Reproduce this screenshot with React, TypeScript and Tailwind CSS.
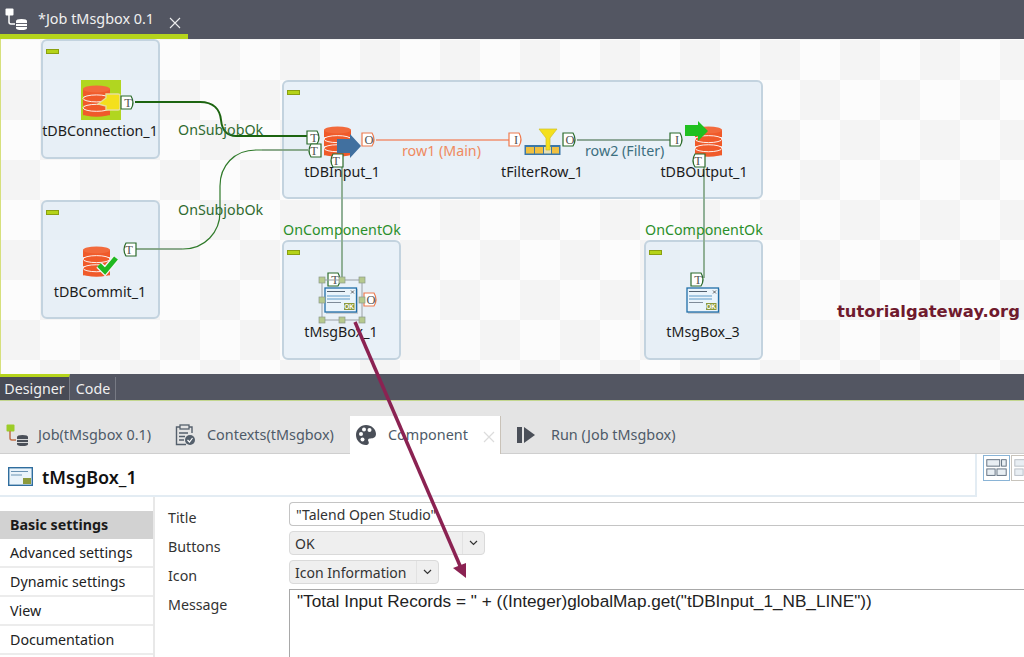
import React from "react";

const GREEN_DARK = "#2b6b2b";
const ORANGE = "#ee7a4e";

// Connector tag on a component (T / O / I)
function Port({ x, y, letter, color, dir = "right" }: { x: number; y: number; letter: string; color: string; dir?: "left" | "right" }) {
  const w = 14;
  const h = 13;
  const d =
    dir === "right"
      ? `M${x} ${y}H${x + w - 4}Q${x + w} ${y + h / 2} ${x + w - 4} ${y + h}H${x}Z`
      : `M${x + w} ${y}H${x + 4}Q${x} ${y + h / 2} ${x + 4} ${y + h}H${x + w}Z`;
  return (
    <g>
      <path d={d} fill="#ffffff" stroke={color} strokeWidth="1.2" />
      <text x={x + 7} y={y + 10.8} textAnchor="middle" fontSize="12.5" fill="#555" fontFamily="'Liberation Serif', serif">
        {letter}
      </text>
    </g>
  );
}

function DbStack({ x, y, w = 27, h = 31 }: { x: number; y: number; w?: number; h?: number }) {
  const c = "#f05a2a";
  const disc = h / 3.4;
  return (
    <g>
      {[0, 1, 2].map((i) => {
        const top = y + (i * (h - disc)) / 2.4;
        return (
          <g key={i}>
            <rect x={x} y={top + 3} width={w} height={disc - 2} fill={c} />
            <ellipse cx={x + w / 2} cy={top + disc - 1} rx={w / 2} ry={3.5} fill={c} />
            <ellipse cx={x + w / 2} cy={top + 3} rx={w / 2} ry={3.5} fill={i === 0 ? "#f26a3c" : c} stroke="#ffffff" strokeWidth={i === 0 ? 0 : 0.9} />
          </g>
        );
      })}
    </g>
  );
}

function MsgIcon({ x, y }: { x: number; y: number }) {
  return (
    <g>
      <rect x={x + 1} y={y + 1} width="32" height="25" fill="#c9ced3" />
      <rect x={x} y={y} width="31.5" height="24" fill="#eaf4fb" stroke="#1f6ea8" strokeWidth="1.3" />
      <path d={`M${x + 2} ${y + 3.5}h18`} stroke="#52606e" strokeWidth="1" />
      <path d={`M${x + 2} ${y + 8}h23M${x + 2} ${y + 11}h23`} stroke="#5d9ac8" strokeWidth="1" />
      <path d={`M${x + 2} ${y + 14.5}h14`} stroke="#7f8c99" strokeWidth="1" />
      <path d={`M${x + 26} ${y + 2.5}l3 3m0-3l-3 3`} stroke="#555" strokeWidth="0.9" />
      <rect x={x + 19} y={y + 15} width="10.5" height="7" fill="#8c9a3c" />
      <text x={x + 24.2} y={y + 21.2} textAnchor="middle" fontSize="6.5" fontWeight="700" fill="#fff" fontFamily="'Liberation Sans', sans-serif">
        OK
      </text>
    </g>
  );
}

function Handle({ x, y }: { x: number; y: number }) {
  return <rect x={x - 3} y={y - 3} width="6" height="6" fill="#b6c98e" stroke="#8d9a8a" strokeWidth="0.7" />;
}

// Wires, ports and component icons of the job diagram
function Diagram() {
  return (
    <svg className="absolute inset-0 w-[1024px] h-[335px]" viewBox="0 39 1024 335">
      <path d="M135 102H200C214 102 220 110 221 120C222 130 226 136 236 136H308" fill="none" stroke="#1c6410" strokeWidth="2" />
      <path d="M135 249H183C205 249 220 232 220 212V186C220 166 234 150 256 150H308" fill="none" stroke="#2f7a2a" strokeWidth="1.2" />
      <path d="M135 249H182M262 150H308" fill="none" stroke="#8aa68c" strokeWidth="1.6" />
      <path d="M376 140H510" stroke="#f09070" strokeWidth="1.6" />
      <path d="M577 140H670" stroke="#6f8f78" strokeWidth="1.6" />
      <path d="M342 165V281" stroke="#90b096" strokeWidth="2" />
      <path d="M704 165V278" stroke="#90b096" strokeWidth="2" />

      {/* tDBConnection */}
      <rect x="81" y="80" width="40" height="40" fill="#b1d620" />
      <DbStack x={83} y={86} w={27} h={32} />
      <path d="M98 104L106 98V94H118Q120 94 120 96V108Q120 110 118 110H106V106Z" fill="#f4e01c" stroke="#e6df9a" strokeWidth="1.4" />
      <Port x={121} y={96} letter="T" color={GREEN_DARK} />

      {/* tDBInput */}
      <DbStack x={324} y={127} w={27} h={31} />
      <path d="M337 139H350V134L361 146L350 158V153H337Z" fill="#41709f" />
      <Port x={307} y={131} letter="T" color={GREEN_DARK} />
      <Port x={307} y={144} letter="T" color={GREEN_DARK} dir="left" />
      <Port x={329} y={154} letter="T" color={GREEN_DARK} dir="left" />
      <Port x={362} y={133} letter="O" color={ORANGE} />

      {/* tFilterRow */}
      <rect x="524.5" y="145" width="36" height="10" fill="#3c78a8" />
      <rect x="526" y="147" width="8" height="6.5" fill="#f0c040" />
      <rect x="535" y="147" width="8" height="6.5" fill="#f0c040" />
      <rect x="544" y="147" width="7" height="6.5" fill="#e8dfb0" />
      <rect x="552" y="147" width="7" height="6.5" fill="#f0c040" />
      <path d="M539 129H557L550 138V150H546V138Z" fill="#f4e01c" stroke="#cfc02a" strokeWidth="0.7" />
      <Port x={509} y={133} letter="I" color={ORANGE} />
      <Port x={563} y={133} letter="O" color={GREEN_DARK} />

      {/* tDBOutput */}
      <DbStack x={695} y={127} w={27} h={31} />
      <path d="M685 125H698V121L708 131L698 141V136H685Z" fill="#1fc01f" />
      <Port x={670} y={133} letter="I" color={GREEN_DARK} />
      <Port x={691} y={154} letter="T" color={GREEN_DARK} dir="left" />

      {/* tDBCommit */}
      <DbStack x={83} y={247} w={27} h={31} />
      <path d="M99 265L105 271L116 258" fill="none" stroke="#f4f4f4" strokeWidth="7.5" />
      <path d="M99 265L105 271L116 258" fill="none" stroke="#1fb81f" strokeWidth="5" />
      <Port x={122} y={243} letter="T" color={GREEN_DARK} dir="left" />

      {/* tMsgBox_1, selected */}
      <Port x={328} y={273} letter="T" color={GREEN_DARK} />
      <Port x={364} y={293} letter="O" color={ORANGE} />
      <rect x="322" y="280" width="40" height="40" fill="none" stroke="#9aa0a4" strokeWidth="1" />
      <MsgIcon x={325} y={288} />
      <Handle x={322} y={280} />
      <Handle x={342} y={280} />
      <Handle x={362} y={280} />
      <Handle x={322} y={300} />
      <Handle x={362} y={300} />
      <Handle x={322} y={320} />
      <Handle x={342} y={320} />
      <Handle x={362} y={320} />

      {/* tMsgBox_3 */}
      <Port x={691} y={273} letter="T" color={GREEN_DARK} />
      <MsgIcon x={687} y={288} />
    </svg>
  );
}

function Canvas() {
  const panel = "absolute rounded-md border-2 border-[#c3d3df] bg-[#e3edf6]/80";
  const bar = "absolute left-[3px] top-[8px] w-[13px] h-[5px] bg-[#b5d318] border border-[#8aa010]";
  const node = "absolute -translate-x-1/2 text-[14.25px] leading-4 text-[#1c1c1c] whitespace-nowrap";
  const wire = "absolute text-[14.25px] leading-5 whitespace-nowrap";
  return (
    <div className="relative h-[335px] shrink-0 overflow-hidden border-l border-[#d6e07c] bg-[image:repeating-conic-gradient(#f4f4f4_0%_25%,#fcfcfc_0%_50%)] bg-[length:80px_80px] bg-[position:-1px_1px]">
      <div className="absolute -left-px top-0 w-[1024px] h-[335px]">
        <div className={`${panel} left-[41px] top-0 w-[119px] h-[120px]`}><div className={bar} /></div>
        <div className={`${panel} left-[282px] top-[41px] w-[481px] h-[119px]`}><div className={bar} /></div>
        <div className={`${panel} left-[41px] top-[161px] w-[119px] h-[119px]`}><div className={bar} /></div>
        <div className={`${panel} left-[282px] top-[201px] w-[119px] h-[120px]`}><div className={bar} /></div>
        <div className={`${panel} left-[644px] top-[201px] w-[119px] h-[120px]`}><div className={bar} /></div>

        <Diagram />

        <span className={`${node} left-[100px] top-[84px]`}>tDBConnection_1</span>
        <span className={`${node} left-[100px] top-[245px]`}>tDBCommit_1</span>
        <span className={`${node} left-[342px] top-[125px]`}>tDBInput_1</span>
        <span className={`${node} left-[542px] top-[125px]`}>tFilterRow_1</span>
        <span className={`${node} left-[704px] top-[125px]`}>tDBOutput_1</span>
        <span className={`${node} left-[341px] top-[285px]`}>tMsgBox_1</span>
        <span className={`${node} left-[703px] top-[285px]`}>tMsgBox_3</span>

        <span className={`${wire} left-[178px] top-[81px] text-[#2f6a2f]`}>OnSubjobOk</span>
        <span className={`${wire} left-[178px] top-[161px] text-[#2f6a2f]`}>OnSubjobOk</span>
        <span className={`${wire} left-[283px] top-[181px] text-[#2a8f2a]`}>OnComponentOk</span>
        <span className={`${wire} left-[645px] top-[181px] text-[#2a8f2a]`}>OnComponentOk</span>
        <span className={`${wire} left-[402px] top-[102px] text-[#ef8a5f]`}>row1 (Main)</span>
        <span className={`${wire} left-[585px] top-[102px] text-[#3d6f80]`}>row2 (Filter)</span>

        <span className="absolute left-[837px] top-[261px] font-['DejaVu_Sans',sans-serif] font-bold text-[16.4px] leading-6 text-[#6f1a2e] whitespace-nowrap">
          tutorialgateway.org
        </span>
      </div>
    </div>
  );
}

function JobIcon({ dark }: { dark?: boolean }) {
  const line = dark ? "#c0704a" : "#ffffff";
  const top = dark ? "#9ccc28" : "#ffffff";
  const db = dark ? "#4a4f58" : "#ffffff";
  return (
    <svg width="23" height="22" viewBox="0 0 23 22">
      <rect x="0.5" y="0.5" width="8" height="7" rx="1" fill={top} />
      <path d="M4 7V14Q4 16 6 16H10" fill="none" stroke={line} strokeWidth="1.5" />
      <path d="M11 13Q11 11 16.5 11T22 13V20Q22 22 16.5 22T11 20Z" fill={db} />
      <path d="M11 15.5H22M11 18.5H22" stroke={dark ? "#e4e4e4" : "#535662"} strokeWidth="0.9" />
    </svg>
  );
}

function LayoutButton({ active }: { active?: boolean }) {
  const c = active ? "#5a6a7a" : "#b5bcc4";
  return (
    <svg className={`w-[27px] h-[26px] shrink-0 border ${active ? "border-[#8ab4d6]" : "border-[#c8c4bc]"}`} viewBox="0 0 27 26">
      <rect x="3" y="4" width="14" height="7" fill="#e8eef3" stroke={c} />
      <rect x="19" y="4" width="5" height="7" fill="#e8eef3" stroke={c} />
      <rect x="3" y="14" width="9" height="7" fill="#e8eef3" stroke={c} />
      <rect x="14" y="14" width="10" height="7" fill="#e8eef3" stroke={c} />
    </svg>
  );
}

function BottomTabs() {
  const text = "text-[14.4px] text-[#4e5a68] whitespace-nowrap";
  return (
    <div className="h-[53px] shrink-0 bg-[#e4e4e4] flex items-end border-b border-[#cfcfcf]">
      <div className="flex items-center h-[37px] pl-[6px] w-[169px] gap-[9px]">
        <JobIcon dark />
        <span className={text}>Job(tMsgbox 0.1)</span>
      </div>
      <div className="flex items-center h-[37px] pl-[6px] w-[181px] gap-[12px]">
        <svg width="20" height="22" viewBox="0 0 20 22" fill="none">
          <path d="M5 3H1.5V20.5H11M14 3H17V9" stroke="#55606c" strokeWidth="1.4" />
          <rect x="5" y="1" width="9" height="4" stroke="#55606c" strokeWidth="1.3" />
          <path d="M4 9H13M4 12.5H10M4 16H9" stroke="#55606c" strokeWidth="1.3" />
          <circle cx="15" cy="16" r="5" fill="#55606c" />
          <path d="M12.5 16L14.5 18L17.5 14" stroke="#fff" strokeWidth="1.2" />
        </svg>
        <span className={text}>Contexts(tMsgbox)</span>
      </div>
      <div className="flex items-center h-[38px] w-[151px] pl-[6px] gap-[12px] bg-white border-r border-[#c9c2b8] -mb-px">
        <svg width="20" height="20" viewBox="0 0 20 20">
          <path d="M10 0C15.5 0 20 4 20 9C20 13 16 13.5 14 13.5C12 13.5 11.5 15 12.5 16.5C13.5 18.5 12 20 10 20C4.5 20 0 15.5 0 10S4.5 0 10 0Z" fill="#4a4f58" />
          <circle cx="5" cy="9" r="2" fill="#fff" />
          <circle cx="8" cy="4.5" r="2" fill="#fff" />
          <circle cx="13.5" cy="5" r="2" fill="#fff" />
          <circle cx="6.5" cy="14.5" r="2" fill="#fff" />
        </svg>
        <span className={`${text} mr-[3px]`}>Component</span>
        <svg width="12" height="12" viewBox="0 0 12 12" className="mt-[3px]">
          <path d="M1 1L11 11M11 1L1 11" stroke="#dcdcdc" strokeWidth="1.2" />
        </svg>
      </div>
      <div className="flex items-center h-[37px] pl-[16px] gap-[16px]">
        <svg width="18" height="16" viewBox="0 0 18 16">
          <rect x="0" y="0" width="5" height="16" fill="#4a4f58" />
          <path d="M7 0L18 8L7 16Z" fill="#4a4f58" />
        </svg>
        <span className={text}>Run (Job tMsgbox)</span>
      </div>
    </div>
  );
}

function DetailHeader() {
  return (
    <div className="flex h-[43px] shrink-0 bg-white">
      <div className="w-[977px] shrink-0 flex items-center pl-[8px] gap-[9px] pt-[4px] border-b-2 border-r-2 border-[#e3ecf3]">
        <svg width="25" height="19" viewBox="0 0 25 19">
          <rect x="0.7" y="0.7" width="23.6" height="17.6" fill="#eaf4fb" stroke="#2f6d9e" strokeWidth="1.4" />
          <path d="M3 4.5H20M3 8H14" stroke="#6a93b3" strokeWidth="1.2" />
          <rect x="15" y="11" width="8" height="6" fill="#8c9a3c" />
        </svg>
        <span className="text-[18px] font-semibold text-[#111] leading-6">tMsgBox_1</span>
      </div>
      <div className="flex pl-[6px] gap-[1px] pt-px shrink-0">
        <LayoutButton active />
        <LayoutButton />
      </div>
    </div>
  );
}

function Sidebar() {
  const item = "h-[29px] flex items-center pl-[10px] pt-px text-[14.25px] text-[#222] border-b-2 border-[#ececec]";
  return (
    <div className="w-[155px] shrink-0 pt-[14px] border-r-2 border-[#e8e8e8]">
      <div className="h-[28px] flex items-center pl-[10px] text-[14.25px] font-bold text-[#1a1a1a] bg-[#d2d2d2]">Basic settings</div>
      <div className={item}>Advanced settings</div>
      <div className={item}>Dynamic settings</div>
      <div className={item}>View</div>
      <div className={item}>Documentation</div>
    </div>
  );
}

function Select({ value, width }: { value: string; width: string }) {
  return (
    <div className={`h-[24px] flex items-center justify-between bg-[#efefef] border border-[#dadada] rounded-sm ${width}`}>
      <span className="pl-[5px] text-[14px] text-[#333] whitespace-nowrap">{value}</span>
      <span className="w-[22px] h-full flex items-center justify-center border-l border-[#e2e2e2]">
        <svg width="9" height="6" viewBox="0 0 9 6" fill="none">
          <path d="M1 1L4.5 4.5L8 1" stroke="#333" strokeWidth="1.2" />
        </svg>
      </span>
    </div>
  );
}

function Form() {
  const label = "w-[121px] shrink-0 text-[14.25px] text-[#333] leading-[31px]";
  return (
    <div className="flex-1 min-w-0 pl-[13px] pt-[5px] flex flex-col gap-[5px] overflow-hidden">
      <div className="flex h-[24px]">
        <span className={label}>Title</span>
        <div className="flex-1 border-y border-l border-[#c4c4c4] rounded-l-sm pl-[6px] text-[14px] leading-[23px] text-[#333] whitespace-nowrap">"Talend Open Studio"</div>
      </div>
      <div className="flex h-[24px]">
        <span className={label}>Buttons</span>
        <Select value="OK" width="w-[196px]" />
      </div>
      <div className="flex h-[24px]">
        <span className={label}>Icon</span>
        <Select value="Icon Information" width="w-[150px]" />
      </div>
      <div className="flex flex-1">
        <span className={label}>Message</span>
        <div className="flex-1 border-l border-t border-[#a8a8a8] pl-[7px] font-['Liberation_Sans',sans-serif] text-[17.2px] leading-[22px] text-[#222] whitespace-nowrap">
          "Total Input Records = " + ((Integer)globalMap.get("tDBInput_1_NB_LINE"))
        </div>
      </div>
    </div>
  );
}

export default function App() {
  return (
    <div className="relative w-[1024px] h-[657px] overflow-hidden bg-white flex flex-col font-['Noto_Sans',sans-serif]">
      <div className="h-[39px] shrink-0 bg-[#535662] flex items-start">
        <div className="w-[188px] h-[39px] border-b-[5px] border-[#b5d41c] flex items-center pl-[5px] pt-[4px] gap-[10px]">
          <JobIcon />
          <span className="text-[14.4px] text-[#f0f0f0] whitespace-nowrap">*Job tMsgbox 0.1</span>
        </div>
        <svg width="12" height="12" viewBox="0 0 12 12" className="mt-[17px] -ml-[19px]">
          <path d="M1 1L11 11M11 1L1 11" stroke="#eeeeee" strokeWidth="1.1" />
        </svg>
      </div>

      <Canvas />

      <div className="h-[26px] shrink-0 bg-[#535662] flex items-end">
        <div className="w-[70px] h-[26px] border-t-[3px] border-r border-r-[#777a84] border-t-[#b5d41c] bg-[#484b56] flex items-center justify-center text-[14.25px] text-[#f0f0f0]">Designer</div>
        <div className="w-[45px] h-[23px] ml-[1px] border-r border-[#777a84] flex items-center justify-center text-[14.25px] text-[#f0f0f0]">Code</div>
      </div>
      <div className="h-px shrink-0 bg-[#c3d68f]" />

      <BottomTabs />
      <DetailHeader />

      <div className="flex flex-1 min-h-0">
        <Sidebar />
        <Form />
      </div>

      {/* Annotation arrow drawn over the screenshot */}
      <svg className="absolute inset-0 w-[1024px] h-[657px] pointer-events-none" viewBox="0 0 1024 657">
        <path d="M355 322L461 568" stroke="#8b2252" strokeWidth="3.5" />
        <path d="M466 578L453 568L466 563Z" fill="#8b2252" />
      </svg>
    </div>
  );
}
